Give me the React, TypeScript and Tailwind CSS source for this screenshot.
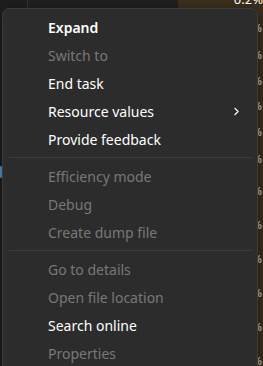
import { ChevronRight } from 'lucide-react';

type Item = { label: string; enabled?: boolean; bold?: boolean; sub?: boolean } | 'sep';

const items: Item[] = [
    { label: 'Expand', enabled: true, bold: true },
    { label: 'Switch to' },
    { label: 'End task', enabled: true },
    { label: 'Resource values', enabled: true, sub: true },
    { label: 'Provide feedback', enabled: true },
    'sep',
    { label: 'Efficiency mode' },
    { label: 'Debug' },
    { label: 'Create dump file' },
    'sep',
    { label: 'Go to details' },
    { label: 'Open file location' },
    { label: 'Search online', enabled: true },
    { label: 'Properties' },
];

// rows of the cpu column that peek out on the right edge
const cpuRows = [28, 27, 27, 26, 27, 27, 33, 35, 35, 35, 35, 35];

export default function App() {
    return (
        <div
            className='relative w-[263px] h-[366px] overflow-hidden bg-[#1c1c1c]'
            style={{ fontFamily: '"Noto Sans", "Open Sans", sans-serif' }}
        >
            {/* the task manager list underneath */}
            <div className='flex h-full'>
                <div className='w-[28px] border-r border-[#343434] bg-[#1e1e1e] relative'>
                    <div className='absolute left-0 top-[166px] w-[2px] h-[12px] bg-[#4f9bd9] rounded-full'></div>
                </div>
                <div className='w-[150px] bg-[#1f1f1f]'></div>
                <div className='flex-1 bg-[#3a2e1c] flex flex-col text-[#e8e8e8] leading-none'>
                    <div className='h-0 flex items-end justify-end pr-[0px] text-[13px] text-white mt-[6px]'>
                        <span className='block'>0.2%</span>
                    </div>
                    {cpuRows.map((h, i) => (
                        <div key={i} style={{ height: h }} className='flex items-end justify-end pr-[1px] text-[11px]'>
                            0.1%
                        </div>
                    ))}
                </div>
            </div>

            {/* context menu */}
            <div className='absolute left-[2px] top-[8px] w-[256px] h-[380px] bg-[#2c2c2c] border border-[#3b3b3b] rounded-[7px] pt-[4px] shadow-[0_4px_12px_rgba(0,0,0,0.5)]'>
                {items.map((it, i) =>
                    it === 'sep' ? (
                        <div key={i} className='h-[9px] flex items-center px-[6px]'>
                            <div className='h-px w-full bg-[#3d3d3d]'></div>
                        </div>
                    ) : (
                        <div
                            key={i}
                            className={`h-[28px] flex items-center pl-[45px] pr-[14px] text-[14px] ${it.enabled ? 'text-white' : 'text-[#787878]'} ${it.bold ? 'font-semibold' : ''}`}
                        >
                            <span className='flex-1'>{it.label}</span>
                            {it.sub && <ChevronRight size={13} strokeWidth={2} className='text-white' />}
                        </div>
                    )
                )}
            </div>
        </div>
    );
}
